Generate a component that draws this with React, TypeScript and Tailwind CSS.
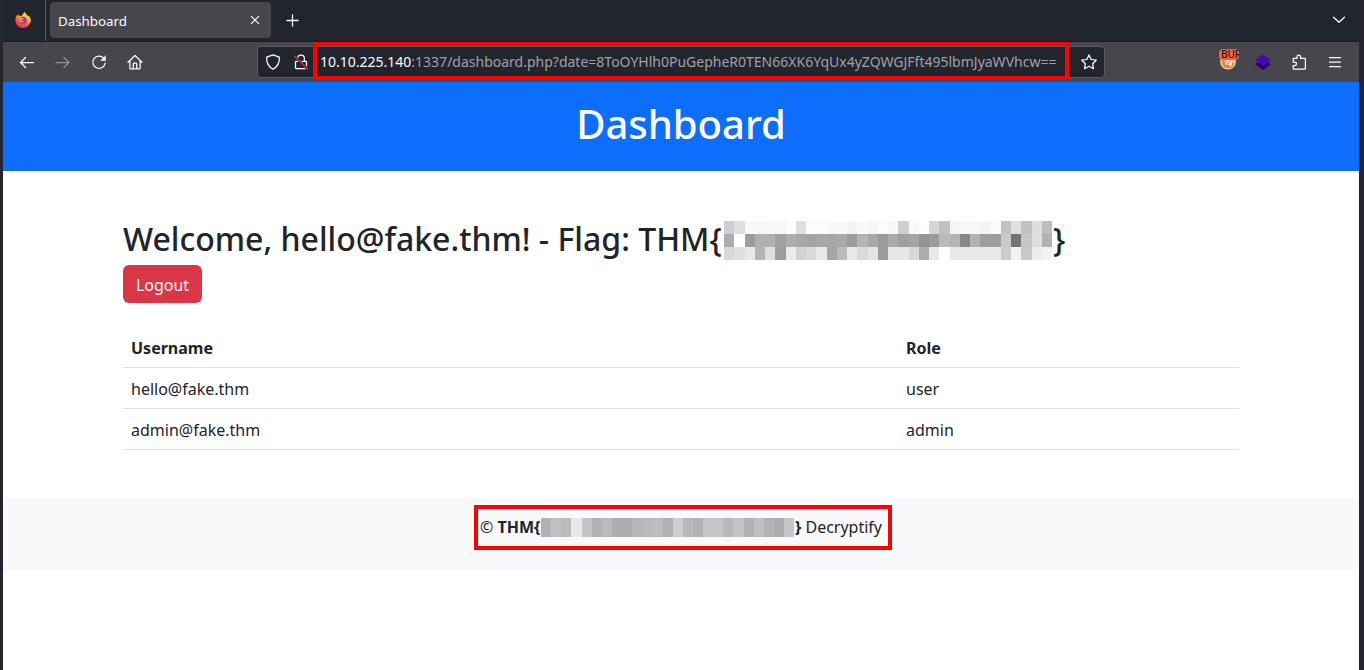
import React from "react";

const flagRows: string[][] = [
  "cfcfd1 dddee0 f8f8f8 f8f8f8 f8f8f8 f7f7f7 fbfbfb dddee0 fcfcfc fcfcfc f8f8f8 f9f9f9 f4f4f4 f9f9f9 f6f6f6 fcfcfc f8f8f8 cdd0d1 f8f8f8 fefefe d3d6d8 c0c1c3 f5f5f5 f8f8f8 f8f8f8 f4f4f4 fbfbfb c0c2c4 dddfe1 c0c2c4 dcdddd bcbdbf",
  "acaeae ffffff 9c9d9f b0b2b2 b0b2b2 a0a1a3 adaeb0 a6a8aa a3a4a6 a6a7a9 a5a6a8 a8a9ab 9a9b9d b2b4b6 a6a8aa 9a9b9d a9abad 9fa0a2 a3a5a5 929395 9b9c9e b8babc b2b4b6 868789 b2b2b2 9d9ea0 9d9ea0 c8cacc 737476 c4c6c8 dcdedf b0b2b4",
  "d8d9db dfe0e2 e8e8e8 b3b4b6 dddee0 9c9ea0 ebebeb d2d3d5 dadada e8e8e8 a4a5a7 b8babc e8e8e8 d8dadc e4e4e4 9b9c9e e6e6e6 e6e6e6 d6d8da abacae e8e8e8 ffffff e8e8e8 e8e8e8 e8e8e8 e8e8e8 e8e8e8 cacccd f2f2f2 c6c8ca ececec f2f2f2",
].map((r) => r.split(" "));

const footerRow: string[][] = [
  "b1b2b4 c1c2c4 bcbcbe e8e8e8 c2c4c6 b0b1b3 b8babc acadaf acadaf b5b6b8 b8b9bb bbbcbe b0b1b3 cccdcf b6b8ba b1b2b4 c4c5c7 c4c5c7 b8b9bb c2c4c6 b1b2b4 bfc0c2 b0b2b4 acadaf c4c6c8".split(" "),
];

function Mosaic({ rows, className }: { rows: string[][]; className: string }) {
  return (
    <span className={`flex shrink-0 flex-col ${className}`}>
      {rows.map((row, i) => (
        <span key={i} className="flex flex-1">
          {row.map((c, j) => (
            <span key={j} className="flex-1" style={{ backgroundColor: `#${c}` }} />
          ))}
        </span>
      ))}
    </span>
  );
}

function Icon({ children, className = "" }: { children: React.ReactNode; className?: string }) {
  return (
    <svg
      viewBox="0 0 16 16"
      fill="none"
      stroke="currentColor"
      strokeWidth="1.25"
      strokeLinecap="round"
      strokeLinejoin="round"
      className={`block size-4 shrink-0 text-[#fbfbfe] ${className}`}
    >
      {children}
    </svg>
  );
}

function FirefoxLogo() {
  return (
    <svg viewBox="0 0 16 16" className="block size-4">
      <defs>
        <linearGradient id="flame" x1="0.8" y1="0" x2="0.25" y2="1">
          <stop offset="0" stopColor="#fff44f" />
          <stop offset="0.35" stopColor="#ffb02e" />
          <stop offset="0.62" stopColor="#ff5a36" />
          <stop offset="1" stopColor="#f0207a" />
        </linearGradient>
      </defs>
      <path
        fill="url(#flame)"
        d="M10 .1c.2 1.5 1.2 2 2 3 .5.5.8 1 1 1.5l.3-1.1c1.7 1.4 2.5 3.2 2.5 4.9A7.7 7.7 0 0 1 8 16 7.8 7.8 0 0 1 .3 8.3C.2 6 1 4 2.2 2.8l.2 1.1L4 2.2 4.2 4c1-.3 2-.2 2.7.1C7.300 2.500 8.500 1 10 .1Z"
      />
      <circle cx="8.1" cy="8.3" r="3.6" fill="#8040d8" />
      <path fill="#ff8b2b" d="M3 6.400c1.200-1.400 2.700-1.200 4-.5l1.600.4c-.2.9-1.200 1.100-1.700 1.300-.4 1.400.8 2 2.300 1.700-.9 1.600-3.300 1.700-4.500.5C3.600 8.900 3.200 7.700 3 6.400Z" />
      <path fill="#ffc33b" d="M9.700 3.400c2.500.8 3.900 3.300 3.100 5.700.5-2-.5-3.500-1.700-4.100Z" />
    </svg>
  );
}

function TabBar() {
  return (
    <div className="flex h-[42px] items-start border-b border-[#1b1b22] bg-[#23252e]">
      <div className="flex h-[41px] w-[43px] items-start border-r border-[#5c5c66] pl-3 pt-3">
        <FirefoxLogo />
      </div>
      <div className="ml-1 mt-[2px] flex h-9 w-[221px] items-center justify-between rounded bg-[#46464c] pl-2 pr-2 text-[#fbfbfe]">
        <span className="text-[13.33px] leading-5 pt-0.5">Dashboard</span>
        <Icon>
          <path d="M4.300 4.300l7.400 7.400M11.700 4.300l-7.400 7.400" strokeWidth="1.100" />
        </Icon>
      </div>
      <Icon className="ml-[13px] mt-[12px]">
        <path d="M8.500 3v11M3 8.500h11" strokeWidth="1.300" />
      </Icon>
      <Icon className="ml-auto mr-3 mt-[12px]">
        <path d="M2.500 5.200L8 10.300l5.500-5.100" strokeWidth="1.300" />
      </Icon>
    </div>
  );
}

function Toolbar() {
  return (
    <div className="flex h-10 items-center bg-[#46464c]">
      <div className="flex w-[254px] items-center gap-5 pl-4">
        <Icon>
          <path d="M14.500 8.500H1.500M6.500 3.500l-5 5 5 5" />
        </Icon>
        <Icon className="opacity-40">
          <path d="M1 8.500h13M9 3.500l5 5-5 5" />
        </Icon>
        <Icon>
          <path d="M12.500 3.900A6.200 6.200 0 1 0 14.200 9" />
          <path d="M14.500 2v4.500H10Z" fill="currentColor" strokeWidth="0.500" />
        </Icon>
        <Icon className="-ml-[0.500px]">
          <path d="M1 8.300L8 1.500l7 6.800M2.900 7v6.900q0 .9.900.9h8.400q.9 0 .9-.9V7M6.300 14.600V9.800q0-.8.800-.8h1.800q.8 0 .8.800v4.800" />
        </Icon>
      </div>
      <div className="relative flex h-8 w-[848px] items-center rounded border border-[#5b5b64] bg-[#23252e] pl-[7px] pr-[7px]">
        <Icon>
          <path d="M8 .9l6.300 2.300c.3 4.800-1.200 9.200-6.300 11.900C2.900 12.400 1.400 8 1.700 3.200Z" />
        </Icon>
        <Icon className="ml-3">
          <path d="M4.600 7V4.500a3.400 3.400 0 0 1 6.800 0V7M3.300 7.300h9.400q.8 0 .8.800v5.700q0 .8-.8.800H3.300q-.8 0-.8-.8V8.100q0-.8.800-.8Z" />
          <path d="M1.500 2.200l13 12.600" stroke="#23252e" strokeWidth="2.600" />
          <path d="M1.500 2.200l13 12.600" stroke="#e22850" strokeWidth="1.200" />
        </Icon>
        <span className="ml-[11px] whitespace-nowrap text-[14px] leading-5 text-[#a0a0a8]">
          <span className="text-[#fbfbfe]">10.10.225.140</span>
          :1337/dashboard.php?date=8ToOYHlh0PuGepheR0TEN66XK6YqUx4yZQWGJFft495lbmJyaWVhcw==
        </span>
        <Icon className="ml-auto">
          <path d="M8 .9l2.200 4.600 5 .7-3.600 3.500.9 5L8 12.300l-4.500 2.400.9-5L.8 6.200l5-.7Z" />
        </Icon>
        <div className="absolute -top-[5px] left-[55px] h-[38px] w-[756px] border-4 border-[#ff0000]" />
      </div>
      <div className="ml-auto flex items-center pr-4">
        <div className="relative mr-4 h-5 w-5">
          <svg viewBox="0 0 20 20" className="block size-5">
            <circle cx="9" cy="9.500" r="8" fill="#d9cda9" />
            <path d="M3.300 7c2 1 4 3 3.800 6.300l2.200-2.500 5.700-.4-1 4c-2 2.100-7.500 2.200-9.700-.5-1.300-1.800-1.600-4.500-1-6.900Z" fill="#e8832d" />
            <path d="M5 10l2.400 3 6-3.500-1 5Z" fill="#f4e6cc" />
          </svg>
          <span className="absolute -top-[3px] left-0 h-[11px] w-5 overflow-hidden rounded-sm bg-[#f2643d] pl-[2px] text-[10px] leading-[11px] text-black">BUR</span>
        </div>
        <svg viewBox="0 0 16 16" className="mr-5 block size-4">
          <path d="M0 10l8-4 8 4-8 6Z" fill="#1b006e" />
          <path d="M0 6.300L8 .3l8 6-8 6Z" fill="#4a08b2" />
        </svg>
        <Icon className="mr-5">
          <path d="M2.200 5.200q0-.8.800-.8h3V2.800a1.800 1.800 0 0 1 3.600 0v1.600h4q.8 0 .8.800v9q0 .9-.8.900H3q-.8 0-.8-.9v-2.700h1.600a1.700 1.700 0 0 0 0-3.400H2.200Z" />
        </Icon>
        <Icon>
          <path d="M2.500 3.500h11M2.500 8h11M2.500 12.500h11" />
        </Icon>
      </div>
    </div>
  );
}

const users = [
  { name: "hello@fake.thm", role: "user" },
  { name: "admin@fake.thm", role: "admin" },
];

export default function App() {
  return (
    <div className="flex h-[670px] w-[1364px] flex-col overflow-hidden border-l-[3px] border-r-[5px] border-[#25252e] bg-white font-['Noto_Sans',sans-serif] text-[#212529]">
      <TabBar />
      <Toolbar />
      <header className="h-[89px] bg-[#0d6efd] pt-[18px] text-center text-white">
        <h1 className="text-[40px] font-medium leading-[48px]">Dashboard</h1>
      </header>
      <main className="mx-auto w-[1116px] pt-12">
        <h2 className="mb-2 flex h-[38px] whitespace-nowrap text-[32px] font-medium leading-[40px]">
          <span className="w-[601px] shrink-0">Welcome, hello@fake.thm! - Flag: THM{"{"}</span>
          <Mosaic rows={flagRows} className="mt-[2px] h-[39px] w-[328px]" />
          <span className="ml-px">{"}"}</span>
        </h2>
        <button className="flex h-[38px] w-[79px] items-center justify-center rounded-md bg-[#dc3545] pt-0.5 text-base text-white">Logout</button>
        <table className="mt-6 w-full table-fixed border-collapse text-left text-base">
          <thead>
            <tr className="h-10 border-b border-[#dee2e6]">
              <th className="w-[775px] px-2 pt-[3px] font-bold">Username</th>
              <th className="px-2 pt-[3px] font-bold">Role</th>
            </tr>
          </thead>
          <tbody>
            {users.map((u) => (
              <tr key={u.name} className="h-[41px] border-b border-[#dee2e6]">
                <td className="px-2 pt-0.5">{u.name}</td>
                <td className="px-2 pt-0.5">{u.role}</td>
              </tr>
            ))}
          </tbody>
        </table>
      </main>
      <footer className="mt-12 flex h-[72px] justify-center bg-[#f8f9fa] pt-[7px]">
        <div className="ml-1 flex h-[45px] w-[418px] items-center whitespace-nowrap border-4 border-[#ff0000] pl-[2px] text-base">
          <span className="w-[61px] shrink-0">© <b>THM{"{"}</b></span>
          <Mosaic rows={footerRow} className="h-[19px] w-[253px]" />
          <span className="ml-px"><b>{"}"}</b> Decryptify</span>
        </div>
      </footer>
    </div>
  );
}
